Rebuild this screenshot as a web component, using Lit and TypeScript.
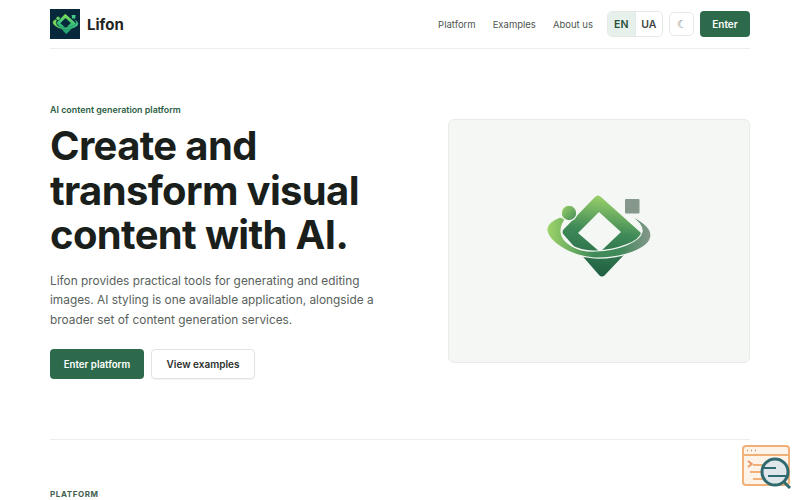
import { LitElement, html, css, svg } from "lit";
import { customElement } from "lit/decorators.js";

const mark = (id: string, light: string, mid: string, dark: string, grey: string, sep: string) => svg`
  <defs>
    <linearGradient id="${id}a" x1="0.6" y1="0" x2="0.45" y2="1">
      <stop offset="0" stop-color="${light}"/><stop offset="0.45" stop-color="${mid}"/><stop offset="1" stop-color="${dark}"/>
    </linearGradient>
    <linearGradient id="${id}b" x1="0" y1="0" x2="1" y2="0">
      <stop offset="0" stop-color="${light}"/><stop offset="0.45" stop-color="${mid}"/><stop offset="0.7" stop-color="${mid}"/><stop offset="1" stop-color="${grey}"/>
    </linearGradient>
    <linearGradient id="${id}c" x1="0" y1="0" x2="1" y2="1">
      <stop offset="0" stop-color="${light}"/><stop offset="1" stop-color="${mid}"/>
    </linearGradient>
  </defs>
  <path fill-rule="evenodd" fill="url(#${id}a)" d="M65 17 Q68 14 71 17 L110 52 Q113 55 110 58 L75 95 Q72 98 69 95 L34 55 Q31 52 34 49 Z M69 32 L48 53 L70 72 L91 52 Z"/>
  <path fill="url(#${id}b)" stroke="${sep}" stroke-width="1.2" d="M30 37 C20 41 16 46 17 51 C19 61 38 76 64 78 C88 79 121 70 121 55 C121 47 110 39 98 35 C107 40 113 46 112 52 C110 62 88 70 66 71 C46 72 32 62 31 52 C31 46 33 42 36 39 Z"/>
  <circle cx="39" cy="33" r="7.8" fill="url(#${id}c)" stroke="${sep}" stroke-width="1.2"/>
  <rect x="95" y="19" width="14.5" height="14.5" rx="1" fill="${grey}"/>
`;

@customElement("app-root")
export class AppRoot extends LitElement {
  static styles = css`
    :host {
      display: block;
      height: 500px;
      overflow: hidden;
      position: relative;
      background: #fff;
      font-family: Inter, "Liberation Sans", sans-serif;
      color: #1a1f1c;
    }
    .wrap { width: 700px; margin: 0 auto; }
    header {
      height: 48px;
      display: flex;
      align-items: center;
      justify-content: space-between;
      border-bottom: 1px solid #eceeec;
    }
    .brand { display: flex; align-items: center; gap: 7px; font-size: 15px; font-weight: 700; color: #1f2421; }
    .logo { width: 30px; height: 30px; background: #06283a; display: flex; align-items: center; justify-content: center; }
    .logo svg { width: 27px; height: 22px; }
    .right { display: flex; align-items: center; }
    nav { display: flex; gap: 17px; font-size: 9.5px; color: #4d5650; margin-right: 14px; }
    .lang { display: flex; height: 24px; border: 1px solid #e6eae7; border-radius: 5px; overflow: hidden; margin-right: 6px; }
    .lang span { width: 26.5px; display: flex; align-items: center; justify-content: center; font-size: 10.5px; font-weight: 600; color: #3c4540; }
    .lang .on { background: #e8f0eb; color: #28523c; border-right: 1px solid #e6eae7; }
    .theme {
      width: 25px; height: 24px; border: 1px solid #e6eae7; border-radius: 5px; margin-right: 6px; box-sizing: border-box;
      display: flex; align-items: center; justify-content: center; font-size: 11px; color: #6b726d;
    }
    .enter {
      width: 50px; height: 26px; background: #2d6a4c; color: #fff; border-radius: 4px;
      display: flex; align-items: center; justify-content: center; font-size: 10px; font-weight: 600;
    }
    .hero {
      display: grid;
      grid-template-columns: 398px 302px;
      height: 390px;
      border-bottom: 1px solid #eceeec;
    }
    .copy { padding-top: 55px; }
    .eyebrow { font-size: 8.9px; font-weight: 600; color: #2d5f46; line-height: 12px; }
    h1 {
      margin: 8px 0 0;
      font-size: 40px;
      line-height: 44.5px;
      font-weight: 700;
      letter-spacing: -0.65px;
      color: #1a1f1c;
    }
    p { margin: 14px 0 0; font-size: 11.85px; line-height: 19.5px; color: #59615c; width: 330px; }
    .actions { display: flex; gap: 7px; margin-top: 19px; }
    .btn {
      height: 30px; border-radius: 4px; display: flex; align-items: center; justify-content: center;
      font-weight: 600; box-sizing: border-box;
    }
    .primary { width: 94px; background: #2d6a4c; color: #fff; font-size: 9.7px; }
    .ghost { width: 104px; border: 1px solid #e1e4e2; color: #2b302d; font-size: 10px; box-shadow: 0 1px 1px rgba(0,0,0,.05); }
    .visual {
      margin-top: 70px; height: 244px; box-sizing: border-box;
      background: #f4f7f3; border: 1px solid #e8ece8; border-radius: 6px;
      display: flex; align-items: center; justify-content: center;
    }
    .visual svg { width: 140px; height: 110px; margin: 0 0 12px 2px; }
    .section { margin: 49px 0 0; font-size: 8px; font-weight: 700; letter-spacing: 0.6px; color: #3f6150; line-height: 11px; }
    .widget { position: absolute; left: 742px; top: 445px; width: 49px; height: 44px; }
  `;

  render() {
    return html`
      <div class="wrap">
        <header>
          <div class="brand">
            <div class="logo">
              <svg viewBox="14 12 110 88">${mark("s", "#8be04e", "#3cc47c", "#1d9c72", "#45c98b", "#06283a")}</svg>
            </div>
            Lifon
          </div>
          <div class="right">
            <nav><span>Platform</span><span>Examples</span><span>About us</span></nav>
            <div class="lang"><span class="on">EN</span><span>UA</span></div>
            <div class="theme">☾</div>
            <div class="enter">Enter</div>
          </div>
        </header>
        <section class="hero">
          <div class="copy">
            <div class="eyebrow">AI content generation platform</div>
            <h1>Create and<br />transform visual<br />content with AI.</h1>
            <p>Lifon provides practical tools for generating and editing images. AI styling is one available application, alongside a broader set of content generation services.</p>
            <div class="actions">
              <div class="btn primary">Enter platform</div>
              <div class="btn ghost">View examples</div>
            </div>
          </div>
          <div class="visual">
            <svg viewBox="0 0 140 110">${mark("b", "#9fd46a", "#3f8a58", "#1f5f42", "#86988c", "#f4f7f3")}</svg>
          </div>
        </section>
        <div class="section">PLATFORM</div>
      </div>
      <svg class="widget" viewBox="0 0 49 44" fill="none">
        <rect x="1" y="1" width="46" height="39" rx="3" fill="#fdf3e8" stroke="#f0b078" stroke-width="2"/>
        <path d="M1 10H47" stroke="#f0b078" stroke-width="2"/>
        <path d="M5 5.5h1M9 5.5h1M13 5.5h1" stroke="#c98d5c" stroke-width="1.4"/>
        <path d="M6 16l4 3-4 3" stroke="#e8955a" stroke-width="1.6"/>
        <path d="M11 20h10M8 27h14M11 34h12" stroke="#f0b078" stroke-width="2"/>
        <path d="M41 36l7 7" stroke="#2f6a70" stroke-width="3"/>
        <circle cx="33" cy="27" r="13" fill="#dfe7ea" stroke="#2f6a70" stroke-width="3"/>
        <path d="M21 23h13M26 31h18" stroke="#2f6a70" stroke-width="2"/>
      </svg>
    `;
  }
}
